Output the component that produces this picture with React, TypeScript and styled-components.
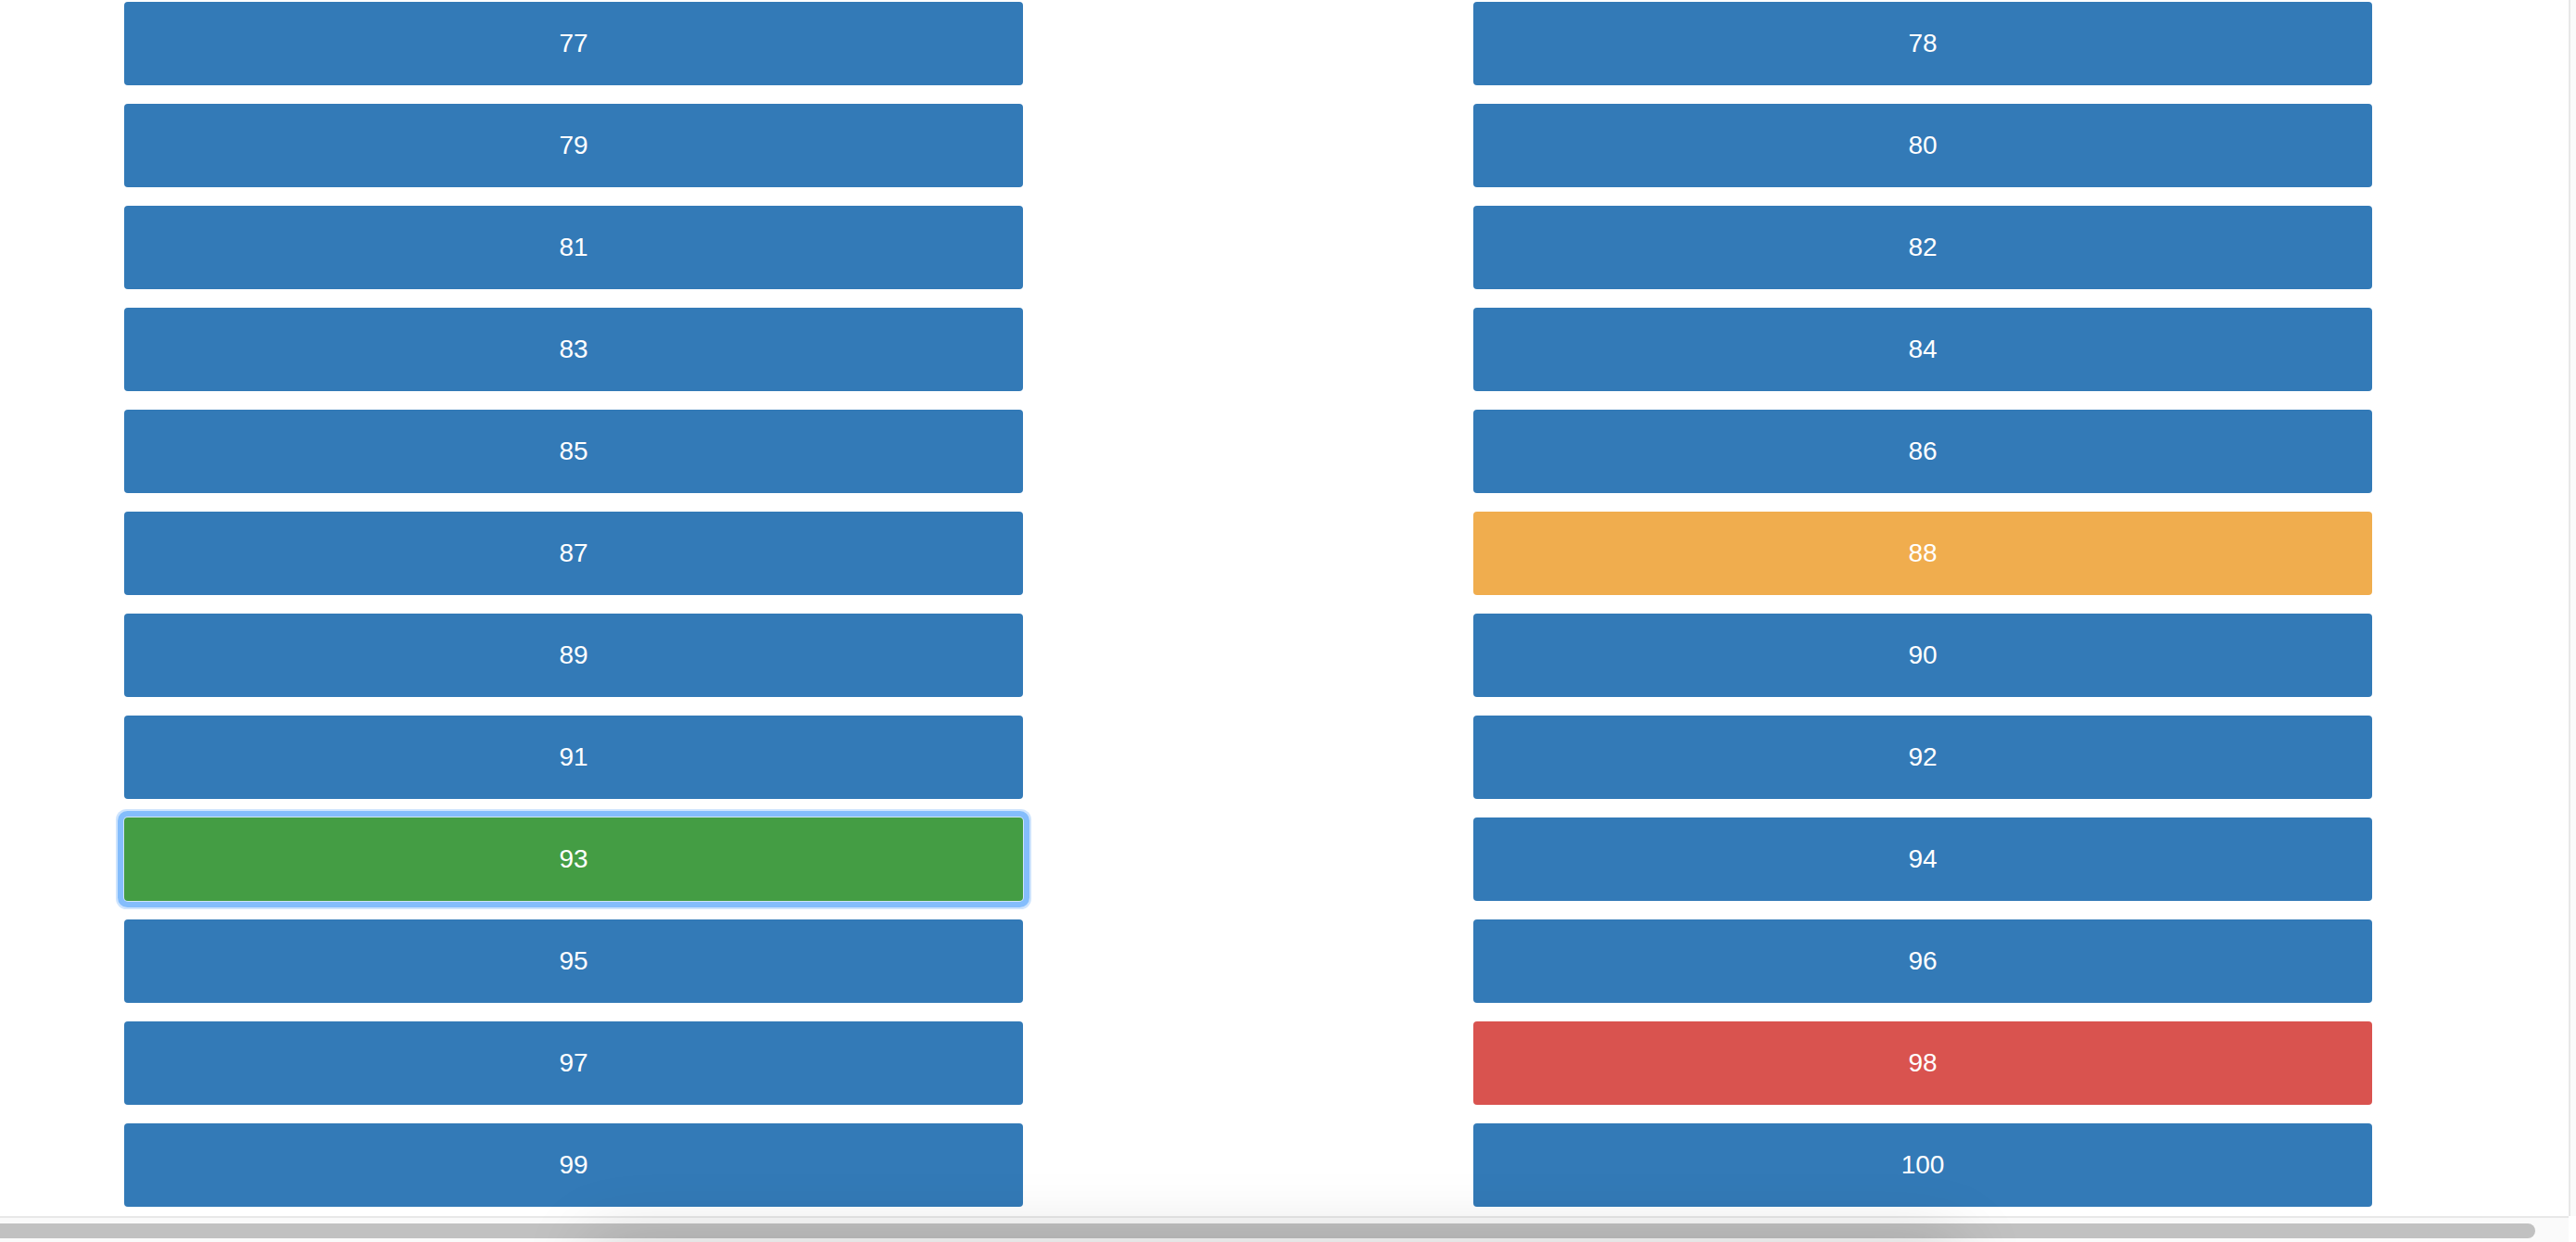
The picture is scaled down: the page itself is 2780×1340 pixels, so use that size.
import React, { useState } from 'react';
import styled, { createGlobalStyle } from 'styled-components';

type Tone = 'primary' | 'success' | 'warning' | 'danger';

const tones: Record<Tone, string> = {
  primary: '#337ab7',
  success: '#449d44',
  warning: '#f0ad4e',
  danger: '#d9534f',
};

const GlobalStyle = createGlobalStyle`
  *, *::before, *::after { box-sizing: border-box; }
  body {
    margin: 0;
    overflow: hidden;
    background: #fff;
    font-family: "Helvetica Neue", Helvetica, "Liberation Sans", Arial, sans-serif;
  }
`;

const Viewport = styled.div`
  display: grid;
  grid-template-columns: minmax(0, 1fr) 8px;
  grid-template-rows: 1fr 28px;
  min-height: 100vh;
`;

const Board = styled.main`
  display: grid;
  grid-template-columns: repeat(2, minmax(0, 1fr));
  grid-auto-rows: min-content;
  gap: 20px 486px;
  padding: 2px 212px 10px 134px;
`;

const NumberButton = styled.button<{ $tone: Tone; $active: boolean }>`
  padding: 25px 24px;
  border: 0;
  border-radius: 4px;
  background: ${({ $tone }) => tones[$tone]};
  color: #fff;
  font-family: inherit;
  font-size: 28px;
  line-height: 40px;
  text-align: center;
  cursor: pointer;
  outline: none;
  box-shadow: ${({ $active }) =>
    $active ? '0 0 0 1px #cfe4fc, 0 0 0 7px #84bdfc, 0 0 0 9px #cee4fd' : 'none'};
`;

const VerticalTrack = styled.div`
  border-left: 2px solid #e8e8e8;
  background: #fafafa;
`;

const HorizontalTrack = styled.div`
  padding: 6px 36px 4px 0;
  border-top: 2px solid #e8e8e8;
  background: #fafafa;
`;

const Thumb = styled.div`
  height: 16px;
  border-radius: 0 8px 8px 0;
  background: #c1c1c1;
`;

const DockShadow = styled.div`
  position: fixed;
  top: 100%;
  left: 23%;
  right: 24%;
  height: 120px;
  pointer-events: none;
  box-shadow: 0 0 76px rgba(0, 0, 0, 0.17);
`;

const numbers = Array.from({ length: 24 }, (_, i) => 77 + i);
const marked: Record<number, Tone> = { 88: 'warning', 93: 'success', 98: 'danger' };

export default function App() {
  const [active, setActive] = useState(93);

  return (
    <>
      <GlobalStyle />
      <Viewport>
        <Board>
          {numbers.map((n) => (
            <NumberButton
              key={n}
              type="button"
              $tone={marked[n] ?? 'primary'}
              $active={n === active}
              onClick={() => setActive(n)}
            >
              {n}
            </NumberButton>
          ))}
        </Board>
        <VerticalTrack />
        <HorizontalTrack>
          <Thumb />
        </HorizontalTrack>
      </Viewport>
      <DockShadow />
    </>
  );
}
